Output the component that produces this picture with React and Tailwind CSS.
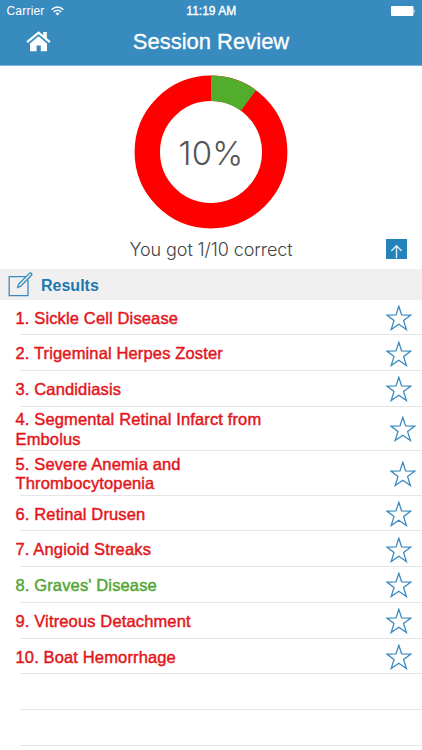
import React from 'react';

const results = [
  { lines: ['1. Sickle Cell Disease'] },
  { lines: ['2. Trigeminal Herpes Zoster'] },
  { lines: ['3. Candidiasis'] },
  { lines: ['4. Segmental Retinal Infarct from', 'Embolus'], height: 'h-[44.4px]' },
  { lines: ['5. Severe Anemia and', 'Thrombocytopenia'], height: 'h-[44.8px]' },
  { lines: ['6. Retinal Drusen'] },
  { lines: ['7. Angioid Streaks'] },
  { lines: ["8. Graves' Disease"], correct: true },
  { lines: ['9. Vitreous Detachment'] },
  { lines: ['10. Boat Hemorrhage'] },
  { lines: [] },
  { lines: [] },
  { lines: [] },
];

const Star = () => (
  <svg className="-mt-px" width="26" height="26" viewBox="0 0 26 26" fill="none" stroke="#3a8abf" strokeWidth="1.3">
    <path d="M12.8 1.3 L15.6 9.9 L24.9 10.1 L17.6 15.6 L20.4 24.5 L12.8 19.2 L5.2 24.5 L8 15.6 L0.9 10.1 L10 9.9 Z" />
  </svg>
);

const StatusBar = () => (
  <div className="grid h-[22px] grid-cols-3 items-center pl-[6.5px] pr-[6px] text-[12px]">
    <div className="flex items-center gap-[6px]">
      <span className="tracking-[0.2px]">Carrier</span>
      <svg width="13" height="10" viewBox="0 0 13 10" fill="none" stroke="white" strokeWidth="1.5">
        <path d="M0.7 3.6 Q6.5 -1.7 12.3 3.6" />
        <path d="M2.8 5.9 Q6.5 2.6 10.2 5.9" />
        <path d="M6.5 9.5 L4.5 7.4 Q6.5 5.8 8.5 7.4 Z" fill="white" stroke="none" />
      </svg>
    </div>
    <span className="text-center [-webkit-text-stroke:0.35px_white]">11:19 AM</span>
    <svg className="justify-self-end" width="25" height="10" viewBox="0 0 25 10" fill="white">
      <rect width="22.5" height="10" rx="1" />
      <path d="M23.2 3.2 Q25 5 23.2 6.8 Z" />
    </svg>
  </div>
);

const Header = () => (
  <header className="h-[66px] border-b border-[#7db4da] bg-[#388bbf] text-white">
    <StatusBar />
    <div className="grid h-[39px] grid-cols-[100px_1fr_100px] items-center">
      <svg className="ml-[26px]" width="25" height="21" viewBox="0 0 25 21">
        <path d="M12.5 5.2 L21 12.4 V20.3 H14.8 V14.6 H10.6 V20.3 H4 V12.4 Z" fill="white" />
        <path d="M1.1 11.2 L12.5 1.7 L23.9 11.2" fill="none" stroke="white" strokeWidth="2.2" />
        <path d="M17.2 1 H20.8 V9 L17.2 6 Z" fill="white" />
      </svg>
      <h1 className="whitespace-nowrap text-center text-[22px] [-webkit-text-stroke:0.3px_white]">
        Session Review
      </h1>
    </div>
  </header>
);

const Score = () => (
  <section className="h-[203px] pt-[9px]">
    <div className="grid place-items-center">
      <svg className="col-start-1 row-start-1" width="154" height="154" viewBox="0 0 154 154">
        <circle cx="77" cy="77" r="63.7" fill="none" stroke="#ff0000" strokeWidth="25.4" />
        <path d="M77 0.6 A76.4 76.4 0 0 1 121.9 15.2 L107 35.7 A51 51 0 0 0 77 26 Z" fill="#53ad2d" />
      </svg>
      <span className="col-start-1 row-start-1 pt-[3px] font-['Inter'] text-[33px] font-light tracking-[0.2px] text-[#555]">
        10%
      </span>
    </div>
    <div className="grid grid-cols-[1fr_auto_1fr] items-center pt-[8px]">
      <p className="col-start-2 whitespace-nowrap pt-[2px] font-['Inter'] text-[18px] leading-[22px] font-light tracking-[-0.1px] text-[#444]">
        You got 1/10 correct
      </p>
      <svg className="mr-[15px] justify-self-end" width="21" height="20" viewBox="0 0 21 20" fill="none">
        <rect width="21" height="20" fill="#2481ba" />
        <path d="M10.5 19.2 V6.8 M5.3 12 L10.5 6.8 L15.7 12" stroke="#d6efff" strokeWidth="1.4" />
      </svg>
    </div>
  </section>
);

const App = () => {
  return (
    <div className="h-[750px] overflow-hidden bg-white font-['Liberation_Sans',sans-serif]">
      <Header />
      <Score />
      {/* Section title */}
      <div className="flex h-[30.5px] items-center gap-[8px] bg-[#f0f0f0] pl-[8px] text-[#1e77b0]">
        <svg width="25" height="25" viewBox="0 0 25 25" fill="none" stroke="#3a8abf" strokeWidth="1.3">
          <path d="M18 4.6 H1.2 V23.6 H20 V7.5" />
          <path d="M9.7 15.5 L10.6 12.2 L21.4 1.4 Q22.6 0.6 23.4 1.5 Q24.2 2.4 23.4 3.3 L12.8 14.2 Z" />
        </svg>
        <h2 className="pt-[3px] text-[16px] font-bold">Results</h2>
      </div>
      {/* List */}
      <ul>
        {results.map(({ lines, correct, height = 'h-[35.7px]' }, i) => (
          <li
            key={i}
            className={`${height} ${correct ? 'text-[#53a635]' : 'text-[#e3161b]'} flex flex-col`}
          >
            <div className={`flex flex-1 items-center justify-between pt-[3px] pl-[15.5px] ${lines.length > 1 ? 'pr-[6px]' : 'pr-[10px]'}`}>
              <div className="whitespace-nowrap text-[16.5px] leading-[19.6px] tracking-[0.14px] [-webkit-text-stroke:0.45px_currentColor]">
                {lines.map((line) => (
                  <p key={line}>{line}</p>
                ))}
              </div>
              {lines.length > 0 && <Star />}
            </div>
            <div className="ml-[20px] h-px shrink-0 bg-[#e6e6e9]" />
          </li>
        ))}
      </ul>
    </div>
  );
};

export default App;
